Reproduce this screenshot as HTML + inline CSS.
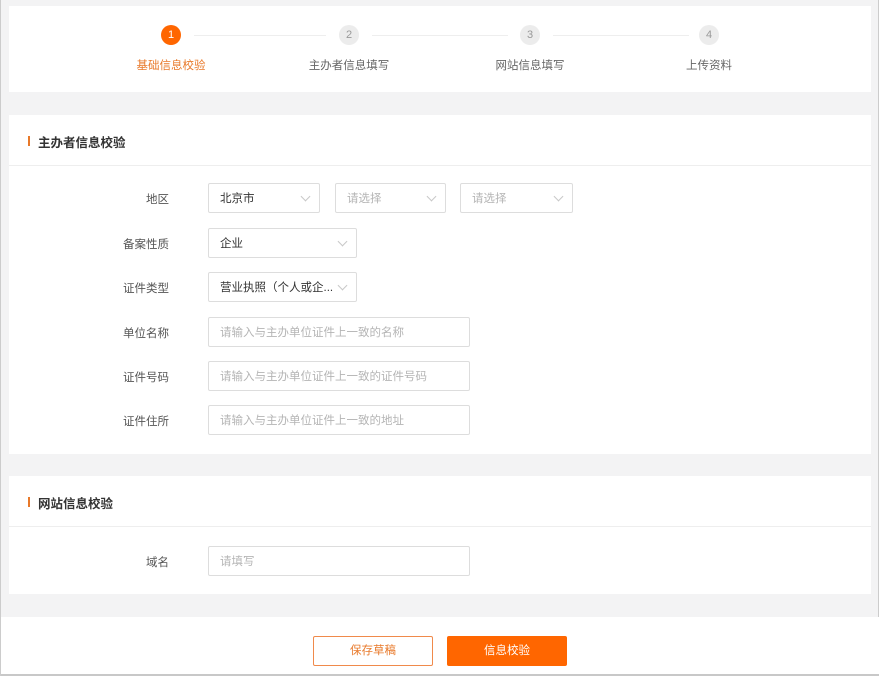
<!DOCTYPE html>
<html><head><meta charset="utf-8"><style>
*{margin:0;padding:0;box-sizing:border-box}
body{width:879px;height:676px;background:#f3f3f4;font-family:"Liberation Sans","Noto Sans CJK SC",sans-serif;font-size:12px;color:#333;position:relative;overflow:hidden;border-left:1px solid #ccc;border-right:1px solid #ccc}
.a{position:absolute}
.w{position:absolute;background:#fff}
.c{position:absolute;width:20px;height:20px;border-radius:50%;background:#ececec;color:#999;font-size:11px;text-align:center;line-height:20px;top:25px}
.c.on{background:#f60;color:#fff}
.ln{position:absolute;height:1px;background:#eee;top:35px}
.sl{position:absolute;top:57px;width:120px;text-align:center;color:#666;font-size:11.5px}
.h{position:absolute;left:37px;font-weight:bold;font-size:12.5px;color:#333}
.bar{position:absolute;left:27px;width:2px;height:10px;background:#e8792a}
.lab{position:absolute;width:80px;text-align:right;left:88px;color:#555;font-size:11.5px}
.f{position:absolute;height:30px;border:1px solid #ddd;border-radius:2px;padding-left:11px;line-height:30px;font-size:11.5px;color:#333}
.f.p{color:#b5b5b5}
.f .v{position:absolute;right:10px;top:9px;width:7px;height:7px;border-right:1px solid #c8c8c8;border-bottom:1px solid #c8c8c8;transform:rotate(45deg)}
</style></head><body>
<div class="w" style="left:8px;top:6px;width:862px;height:86px"></div>
<div class="c on" style="left:160px">1</div>
<div class="c" style="left:338px">2</div>
<div class="c" style="left:519px">3</div>
<div class="c" style="left:698px">4</div>
<div class="ln" style="left:193px;width:132px"></div>
<div class="ln" style="left:371px;width:136px"></div>
<div class="ln" style="left:552px;width:136px"></div>
<div class="sl" style="left:110px;color:#e8792a">基础信息校验</div>
<div class="sl" style="left:288px">主办者信息填写</div>
<div class="sl" style="left:469px">网站信息填写</div>
<div class="sl" style="left:648px">上传资料</div>

<div class="w" style="left:8px;top:115px;width:862px;height:339px"></div>
<div class="bar" style="top:136px"></div>
<div class="h" style="top:132px">主办者信息校验</div>
<div class="a" style="left:8px;top:165px;width:862px;height:1px;background:#eee"></div>

<div class="lab" style="top:191px">地区</div>
<div class="f" style="left:207px;top:183px;width:112px">北京市<span class="v"></span></div>
<div class="f p" style="left:334px;top:183px;width:111px">请选择<span class="v"></span></div>
<div class="f p" style="left:459px;top:183px;width:113px">请选择<span class="v"></span></div>
<div class="lab" style="top:236px">备案性质</div>
<div class="f" style="left:207px;top:228px;width:149px">企业<span class="v"></span></div>
<div class="lab" style="top:280px">证件类型</div>
<div class="f" style="left:207px;top:272px;width:149px">营业执照（个人或企...<span class="v"></span></div>
<div class="lab" style="top:325px">单位名称</div>
<div class="f p" style="left:207px;top:317px;width:262px">请输入与主办单位证件上一致的名称</div>
<div class="lab" style="top:369px">证件号码</div>
<div class="f p" style="left:207px;top:361px;width:262px">请输入与主办单位证件上一致的证件号码</div>
<div class="lab" style="top:413px">证件住所</div>
<div class="f p" style="left:207px;top:405px;width:262px">请输入与主办单位证件上一致的地址</div>

<div class="w" style="left:8px;top:476px;width:862px;height:118px"></div>
<div class="bar" style="top:497px"></div>
<div class="h" style="top:493px">网站信息校验</div>
<div class="a" style="left:8px;top:526px;width:862px;height:1px;background:#eee"></div>
<div class="lab" style="top:554px">域名</div>
<div class="f p" style="left:207px;top:546px;width:262px">请填写</div>

<div class="w" style="left:0;top:617px;width:879px;height:59px;border-bottom:2px solid #c8c8c8"></div>
<div class="a" style="left:312px;top:636px;width:120px;height:30px;border:1px solid #f08a4b;border-radius:2px;text-align:center;line-height:28px;color:#e8792a;font-size:11.5px;background:#fff">保存草稿</div>
<div class="a" style="left:446px;top:636px;width:120px;height:30px;background:#f60;border-radius:2px;text-align:center;line-height:30px;color:#fff;font-size:11.5px">信息校验</div>
</body></html>
